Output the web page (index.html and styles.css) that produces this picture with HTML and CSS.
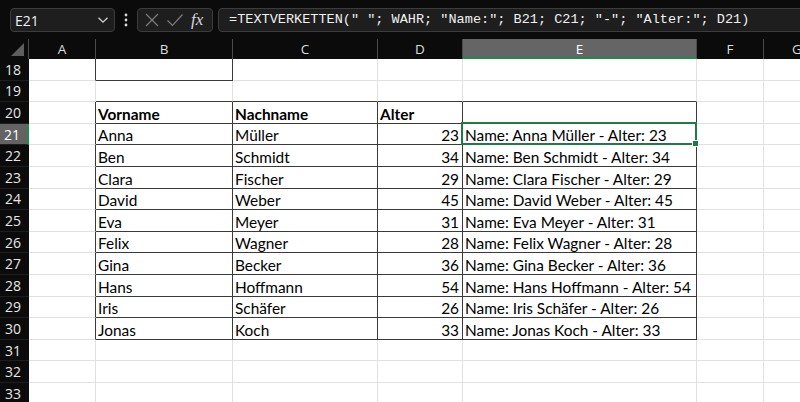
FILE: index.html
```html
<!DOCTYPE html>
<html lang="de">
<head>
<meta charset="utf-8">
<link rel="stylesheet" href="styles.css">
</head>
<body>
<div class="toolbar">
  <div class="namebox">
    <span class="nb-text">E21</span>
    <svg class="chev" width="12" height="8" viewBox="0 0 12 8"><path d="M1.5 1.8 L6 6.2 L10.5 1.8" fill="none" stroke="#cfcfcf" stroke-width="1.3"/></svg>
  </div>
  <div class="dots">
    <svg width="4" height="14" viewBox="0 0 4 14"><circle cx="2" cy="2" r="1.4" fill="#d8d8d8"/><circle cx="2" cy="7" r="1.4" fill="#d8d8d8"/><circle cx="2" cy="12" r="1.4" fill="#d8d8d8"/></svg>
  </div>
  <div class="fxbox">
    <svg class="ico" width="16" height="16" viewBox="0 0 16 16"><path d="M2 2 L14 14 M14 2 L2 14" stroke="#7c7c7c" stroke-width="1.2" fill="none"/></svg>
    <svg class="ico" width="18" height="16" viewBox="0 0 18 16"><path d="M1.5 8.5 L6.5 13.5 L16.5 2.5" stroke="#7c7c7c" stroke-width="1.2" fill="none"/></svg>
    <span class="fx">fx</span>
  </div>
  <div class="formula">=TEXTVERKETTEN(" "; WAHR; "Name:"; B21; C21; "-"; "Alter:"; D21)</div>
</div>

<div class="sheet">
  <div class="hd corner"><span class="tri"></span></div>
  <div class="hd col">A</div>
  <div class="hd col">B</div>
  <div class="hd col">C</div>
  <div class="hd col">D</div>
  <div class="hd col sel">E</div>
  <div class="hd col">F</div>
  <div class="hd col">G</div>

  <div class="rh">18</div>
  <div class="c lb"></div><div class="c box"></div><div class="c"></div><div class="c"></div><div class="c"></div><div class="c"></div><div class="c"></div>

  <div class="rh">19</div>
  <div class="c"></div><div class="c tb"></div><div class="c tb"></div><div class="c tb"></div><div class="c tb"></div><div class="c"></div><div class="c"></div>

  <div class="rh">20</div>
  <div class="c lb"></div><div class="c t b">Vorname</div><div class="c t b">Nachname</div><div class="c t b">Alter</div><div class="c t"></div><div class="c"></div><div class="c"></div>

  <div class="rh rsel">21</div>
  <div class="c lb"></div><div class="c t">Anna</div><div class="c t">Müller</div><div class="c t n">23</div><div class="c t active">Name: Anna Müller - Alter: 23<span class="selbox"><span class="handle"></span></span></div><div class="c"></div><div class="c"></div>

  <div class="rh">22</div>
  <div class="c lb"></div><div class="c t">Ben</div><div class="c t">Schmidt</div><div class="c t n">34</div><div class="c t">Name: Ben Schmidt - Alter: 34</div><div class="c"></div><div class="c"></div>

  <div class="rh">23</div>
  <div class="c lb"></div><div class="c t">Clara</div><div class="c t">Fischer</div><div class="c t n">29</div><div class="c t">Name: Clara Fischer - Alter: 29</div><div class="c"></div><div class="c"></div>

  <div class="rh">24</div>
  <div class="c lb"></div><div class="c t">David</div><div class="c t">Weber</div><div class="c t n">45</div><div class="c t">Name: David Weber - Alter: 45</div><div class="c"></div><div class="c"></div>

  <div class="rh">25</div>
  <div class="c lb"></div><div class="c t">Eva</div><div class="c t">Meyer</div><div class="c t n">31</div><div class="c t">Name: Eva Meyer - Alter: 31</div><div class="c"></div><div class="c"></div>

  <div class="rh">26</div>
  <div class="c lb"></div><div class="c t">Felix</div><div class="c t">Wagner</div><div class="c t n">28</div><div class="c t">Name: Felix Wagner - Alter: 28</div><div class="c"></div><div class="c"></div>

  <div class="rh">27</div>
  <div class="c lb"></div><div class="c t">Gina</div><div class="c t">Becker</div><div class="c t n">36</div><div class="c t">Name: Gina Becker - Alter: 36</div><div class="c"></div><div class="c"></div>

  <div class="rh">28</div>
  <div class="c lb"></div><div class="c t">Hans</div><div class="c t">Hoffmann</div><div class="c t n">54</div><div class="c t">Name: Hans Hoffmann - Alter: 54</div><div class="c"></div><div class="c"></div>

  <div class="rh">29</div>
  <div class="c lb"></div><div class="c t">Iris</div><div class="c t">Schäfer</div><div class="c t n">26</div><div class="c t">Name: Iris Schäfer - Alter: 26</div><div class="c"></div><div class="c"></div>

  <div class="rh">30</div>
  <div class="c lb"></div><div class="c t">Jonas</div><div class="c t">Koch</div><div class="c t n">33</div><div class="c t">Name: Jonas Koch - Alter: 33</div><div class="c"></div><div class="c"></div>

  <div class="rh">31</div>
  <div class="c"></div><div class="c"></div><div class="c"></div><div class="c"></div><div class="c"></div><div class="c"></div><div class="c"></div>

  <div class="rh">32</div>
  <div class="c"></div><div class="c"></div><div class="c"></div><div class="c"></div><div class="c"></div><div class="c"></div><div class="c"></div>

  <div class="rh">33</div>
  <div class="c"></div><div class="c"></div><div class="c"></div><div class="c"></div><div class="c"></div><div class="c"></div><div class="c"></div>
</div>
</body>
</html>
```

FILE: styles.css
```css
html, body {
  margin: 0;
  padding: 0;
  background: #0b0b0b;
  width: 800px;
  height: 402px;
  overflow: hidden;
}

.toolbar {
  height: 39px;
  display: flex;
  align-items: flex-start;
  padding: 8px 0 0 10px;
  box-sizing: border-box;
  width: 820px;
}

.namebox {
  width: 105px;
  height: 24px;
  box-sizing: border-box;
  border: 1px solid #3c3c3c;
  border-radius: 4px;
  background: #1e1e1e;
  display: flex;
  align-items: center;
  justify-content: space-between;
  padding: 0 5px 0 4px;
}

.nb-text {
  font-family: "Open Sans", "Noto Sans", sans-serif;
  font-size: 14px;
  color: #f0f0f0;
}

.dots {
  width: 22px;
  height: 24px;
  display: flex;
  align-items: center;
  justify-content: center;
}

.fxbox {
  width: 76px;
  height: 24px;
  box-sizing: border-box;
  border: 1px solid #3c3c3c;
  border-radius: 4px;
  background: #1e1e1e;
  display: flex;
  align-items: center;
  padding: 0 0 0 6px;
  gap: 6px;
}

.ico { display: block; }

.fx {
  font-family: "Liberation Serif", "DejaVu Serif", serif;
  font-style: italic;
  font-size: 17px;
  color: #d8d8d8;
  margin-left: 1px;
}

.formula {
  flex: 1;
  margin-left: 5px;
  height: 24px;
  box-sizing: border-box;
  border: 1px solid #3c3c3c;
  border-radius: 4px;
  background: #1e1e1e;
  font-family: "Liberation Mono", "DejaVu Sans Mono", monospace;
  font-size: 13.55px;
  color: #f0f0f0;
  line-height: 22px;
  padding-left: 10px;
  white-space: pre;
}

.sheet {
  display: grid;
  grid-template-columns: 29px 67px 137px 145px 85px 234px 67px 67px;
  grid-template-rows: 20px repeat(16, 21.6px);
  width: 831px;
}

.hd {
  background: #0b0b0b;
  box-sizing: border-box;
  border-right: 1px solid #4a4a4a;
  font-family: "Open Sans", "Noto Sans", sans-serif;
  font-size: 13.5px;
  color: #dcdcdc;
  display: flex;
  align-items: center;
  justify-content: center;
}

.corner { position: relative; }

.tri {
  position: absolute;
  right: 4px;
  bottom: 3px;
  width: 0;
  height: 0;
  border-left: 13px solid transparent;
  border-bottom: 13px solid #5e5e5e;
}

.hd.sel {
  background: #656565;
  border-bottom: 2px solid #1f8a4c;
  color: #ffffff;
  padding-top: 2px;
}

.rh {
  background: #0b0b0b;
  box-sizing: border-box;
  border-bottom: 1px solid #1e1e1e;
  font-family: "Open Sans", "Noto Sans", sans-serif;
  font-size: 14px;
  color: #e6e6e6;
  display: flex;
  align-items: center;
  justify-content: center;
  padding-right: 3px;
}

.rh.rsel {
  background: #636363;
  border-right: 2px solid #1f8a4c;
  color: #ffffff;
}

.c {
  background: #ffffff;
  box-sizing: border-box;
  border-right: 1px solid #e1e1e1;
  border-bottom: 1px solid #e1e1e1;
  font-family: Lato, "Open Sans", sans-serif;
  font-size: 15.4px;
  color: #000000;
  padding: 0 3px 0 2px;
  display: flex;
  align-items: flex-end;
  line-height: 18px;
  white-space: nowrap;
}

.c.lb { border-right-color: #3a3a3a; }
.c.tb { border-bottom-color: #3a3a3a; }
.c.box { border-right-color: #3a3a3a; border-bottom-color: #3a3a3a; }
.c.t { border-right-color: #3a3a3a; border-bottom-color: #3a3a3a; }
.c.b { font-weight: bold; }
.c.n { justify-content: flex-end; }

.c.active { position: relative; }

.selbox {
  position: absolute;
  left: -2px;
  top: -2px;
  right: -1px;
  bottom: -1px;
  border: 2px solid #1f7a45;
}

.handle {
  position: absolute;
  right: -4px;
  bottom: -4px;
  width: 5px;
  height: 5px;
  background: #1f7a45;
  border: 1px solid #ffffff;
}
```
